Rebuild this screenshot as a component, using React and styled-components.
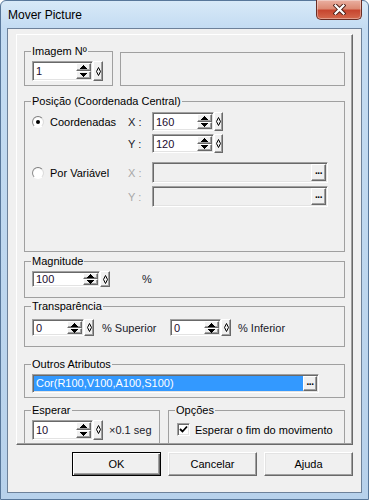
import React from 'react';
import styled, { createGlobalStyle, css } from 'styled-components';

const GlobalStyle = createGlobalStyle`
  html, body {
    margin: 0;
    padding: 0;
    background: #ffffff;
  }
  *, *::before, *::after {
    box-sizing: border-box;
  }
`;

// classic 3d bevels
const raised = css`
  background: #f0f0f0;
  border: 1px solid;
  border-color: #ffffff #696969 #696969 #ffffff;
  box-shadow: inset -1px -1px 0 #a0a0a0;
`;

const sunken = css`
  border: 1px solid;
  border-color: #a0a0a0 #ffffff #ffffff #a0a0a0;
  box-shadow: inset 1px 1px 0 #696969, inset -1px -1px 0 #e3e3e3;
`;

const Window = styled.div`
  width: 369px;
  height: 500px;
  display: flex;
  flex-direction: column;
  border: 1px solid #58779a;
  border-radius: 6px 6px 0 0;
  background: linear-gradient(180deg, #d8e9f8 0px, #c4dcf2 26px, #b7d1eb 100%);
  font-family: "Liberation Sans", Arial, sans-serif;
  font-size: 11px;
  color: #000;
`;

const TitleBar = styled.div`
  height: 27px;
  display: flex;
  align-items: flex-start;
  justify-content: space-between;
  padding-left: 7px;
`;

const Title = styled.span`
  align-self: center;
  font-size: 12px;
  line-height: 14px;
  color: #000;
`;

const CloseButton = styled.div`
  width: 46px;
  height: 20px;
  margin: -1px 6px 0 0;
  display: flex;
  align-items: center;
  justify-content: center;
  border: 1px solid #6a2d24;
  border-top: none;
  border-radius: 0 0 5px 5px;
  background: linear-gradient(180deg, #eab0a2 0%, #dc8a74 45%, #c7462f 55%, #d4694d 100%);
  box-shadow: inset 0 0 0 1px rgba(255, 255, 255, 0.35);
`;

const Client = styled.div`
  flex: 1;
  margin: 0 6px 6px 6px;
  padding: 5px 8px 16px 8px;
  display: flex;
  flex-direction: column;
  border: 1px solid #6d8199;
  background: #f0f0f0;
`;

const Panel = styled.div`
  height: 411px;
  display: flex;
  flex-direction: column;
  padding: 10px 7px 0 7px;
  border: 1px solid;
  border-color: #ffffff #696969 #696969 #ffffff;
  box-shadow: inset -1px -1px 0 #a0a0a0;
`;

const TopRow = styled.div`
  display: flex;
  align-items: flex-end;
  gap: 7px;
`;

const BottomRow = styled.div`
  display: flex;
  gap: 8px;
  margin-top: 6px;
`;

const Group = styled.fieldset`
  margin: 0;
  margin-top: ${p => p.$mt || 0}px;
  width: ${p => (p.$w ? `${p.$w}px` : 'auto')};
  flex: ${p => (p.$w ? 'none' : '1')};
  min-width: 0;
  padding: ${p => p.$pt ?? 3}px 7px ${p => p.$pb ?? 3}px 7px;
  border: 1px solid #a0a0a0;
`;

const Legend = styled.legend`
  margin-left: -1px;
  padding: 0 1px;
  font-size: 11px;
  line-height: 13px;
  color: #000;
`;

const Row = styled.div`
  display: flex;
  align-items: center;
  height: ${p => p.$h}px;
`;

const EmptyFrame = styled.div`
  flex: 1;
  height: 34px;
  border: 1px solid #a0a0a0;
`;

const SpinWrap = styled.div`
  display: flex;
  align-items: stretch;
`;

const SpinBox = styled.div`
  ${sunken}
  width: ${p => p.$w}px;
  height: ${p => p.$h}px;
  padding: 1px;
  display: flex;
  align-items: stretch;
  background: #ffffff;
`;

const SpinValue = styled.span`
  flex: 1;
  display: flex;
  align-items: center;
  padding-left: 2px;
  color: #1b0a2e;
`;

const SpinButtons = styled.div`
  width: 15px;
  display: flex;
  flex-direction: column;
`;

const SpinBtn = styled.div`
  ${raised}
  flex: 1;
  display: flex;
  align-items: center;
  justify-content: center;
`;

const DiamondBtn = styled.div`
  ${raised}
  width: ${p => p.$w}px;
  display: flex;
  align-items: center;
  justify-content: center;
`;

const Unit = styled.span`
  margin-left: ${p => p.$ml || 0}px;
  width: ${p => (p.$w ? `${p.$w}px` : 'auto')};
  color: #1a1a2a;
  white-space: nowrap;
`;

const CoordBlock = styled.div`
  display: grid;
  grid-template-columns: 96px 24px auto;
  grid-auto-rows: ${p => p.$row}px;
  row-gap: 3px;
  align-items: center;
  margin-top: ${p => p.$mt || 0}px;
`;

const Choice = styled.label`
  grid-row: 1;
  grid-column: 1;
  display: flex;
  align-items: center;
  gap: 6px;
`;

const Radio = styled.span`
  width: 12px;
  height: 12px;
  display: flex;
  align-items: center;
  justify-content: center;
  border-radius: 50%;
  border: 1px solid;
  border-color: #7c7c7c #dcdcdc #ffffff #8c8c8c;
  background: radial-gradient(circle at 50% 60%, #ffffff 55%, #e6e6e6 100%);

  &::after {
    content: '';
    width: 4px;
    height: 4px;
    border-radius: 50%;
    background: ${p => (p.$checked ? '#000' : 'transparent')};
  }
`;

const Axis = styled.span`
  grid-column: 2;
  color: ${p => (p.$disabled ? '#a8a8a8' : '#1a1a2a')};
`;

const Cell = styled.div`
  grid-column: 3;
  display: flex;
`;

const PickField = styled.div`
  ${sunken}
  width: ${p => p.$w}px;
  height: ${p => p.$h}px;
  padding: 1px;
  display: flex;
  align-items: center;
  background: ${p => (p.$selected ? '#3399ff' : '#f0f0f0')};
`;

const PickText = styled.span`
  flex: 1;
  padding-left: 2px;
  color: #ffffff;
  white-space: nowrap;
`;

const PickButton = styled.div`
  ${raised}
  width: ${p => p.$w}px;
  height: ${p => p.$h}px;
  margin-left: auto;
  display: flex;
  align-items: center;
  justify-content: center;
  padding-bottom: 3px;
  font-size: 10px;
  font-weight: bold;
  letter-spacing: -0.5px;
  line-height: 1;
`;

const CheckRow = styled.label`
  display: flex;
  align-items: center;
  gap: 5px;
  margin-left: 1px;
`;

const CheckBox = styled.span`
  ${sunken}
  width: 13px;
  height: 13px;
  display: flex;
  align-items: center;
  justify-content: center;
  background: #ffffff;
`;

const ButtonRow = styled.div`
  display: flex;
  justify-content: flex-end;
  gap: 7px;
  margin-top: 7px;
`;

const DialogButton = styled.button`
  width: 89px;
  height: 24px;
  padding: 0;
  font-family: "Liberation Sans", Arial, sans-serif;
  font-size: 11px;
  color: #000;
  background: #f0f0f0;
  border: 1px solid;
  border-color: ${p => (p.$default ? '#000 #000 #000 #000' : '#ffffff #696969 #696969 #ffffff')};
  box-shadow: ${p =>
    p.$default
      ? 'inset 1px 1px 0 #ffffff, inset -1px -1px 0 #696969, inset -2px -2px 0 #a0a0a0'
      : 'inset -1px -1px 0 #a0a0a0, inset 1px 1px 0 #e3e3e3'};
`;

function Arrow({ up }) {
  return (
    <svg width="7" height="4" viewBox="0 0 7 4" shapeRendering="crispEdges">
      <path d={up ? 'M3 0h1v1h1v1h1v1h1v1H0V3h1V2h1V1h1z' : 'M0 0h7v1H6v1H5v1H4v1H3V3H2V2H1V1H0z'} fill="#000" />
    </svg>
  );
}

function Spinner({ value, w, h = 20, d = 10 }) {
  return (
    <SpinWrap>
      <SpinBox $w={w} $h={h}>
        <SpinValue>{value}</SpinValue>
        <SpinButtons>
          <SpinBtn><Arrow up /></SpinBtn>
          <SpinBtn><Arrow /></SpinBtn>
        </SpinButtons>
      </SpinBox>
      <DiamondBtn $w={d}>
        <svg width="5" height="9" viewBox="0 0 5 9">
          <path d="M2.5 0.5 L4.5 4.5 L2.5 8.5 L0.5 4.5 Z" fill="none" stroke="#000" strokeWidth="1" />
        </svg>
      </DiamondBtn>
    </SpinWrap>
  );
}

export default function App() {
  return (
    <>
      <GlobalStyle />
      <Window>
        <TitleBar>
          <Title>Mover Picture</Title>
          <CloseButton>
            <svg width="13" height="11" viewBox="0 0 13 11">
              <path d="M2.5 1.5 L10.5 9.5 M10.5 1.5 L2.5 9.5" stroke="#4a1d16" strokeWidth="4" strokeLinecap="square" />
              <path d="M2.5 1.5 L10.5 9.5 M10.5 1.5 L2.5 9.5" stroke="#ffffff" strokeWidth="2.2" strokeLinecap="square" />
            </svg>
          </CloseButton>
        </TitleBar>

        <Client>
          <Panel>
            <TopRow>
              <Group $w={89} $pt={3} $pb={4}>
                <Legend>Imagem Nº</Legend>
                <Row $h={20}>
                  <Spinner value="1" w={61} h={20} />
                </Row>
              </Group>
              <EmptyFrame />
            </TopRow>

            <Group $mt={9} $pt={4} $pb={44}>
              <Legend>Posição (Coordenada Central)</Legend>
              <CoordBlock $row={19}>
                <Choice>
                  <Radio $checked />
                  Coordenadas
                </Choice>
                <Axis>X :</Axis>
                <Cell><Spinner value="160" w={62} h={19} d={9} /></Cell>
                <Axis>Y :</Axis>
                <Cell><Spinner value="120" w={62} h={19} d={9} /></Cell>
              </CoordBlock>
              <CoordBlock $row={21} $mt={9}>
                <Choice>
                  <Radio />
                  Por Variável
                </Choice>
                <Axis $disabled>X :</Axis>
                <Cell>
                  <PickField $w={176} $h={21}>
                    <PickButton $w={15} $h={17}>...</PickButton>
                  </PickField>
                </Cell>
                <Axis $disabled>Y :</Axis>
                <Cell>
                  <PickField $w={176} $h={21}>
                    <PickButton $w={15} $h={17}>...</PickButton>
                  </PickField>
                </Cell>
              </CoordBlock>
            </Group>

            <Group $mt={3} $pt={3} $pb={6}>
              <Legend>Magnitude</Legend>
              <Row $h={16}>
                <Spinner value="100" w={68} h={16} />
                <Unit $ml={32}>%</Unit>
              </Row>
            </Group>

            <Group $mt={2} $pt={6} $pb={6}>
              <Legend>Transparência</Legend>
              <Row $h={17}>
                <Spinner value="0" w={52} h={17} />
                <Unit $ml={8} $w={68}>% Superior</Unit>
                <Spinner value="0" w={51} h={17} />
                <Unit $ml={7}>% Inferior</Unit>
              </Row>
            </Group>

            <Group $mt={11} $pt={3} $pb={3}>
              <Legend>Outros Atributos</Legend>
              <Row $h={19}>
                <PickField $w={287} $h={19} $selected>
                  <PickText>Cor(R100,V100,A100,S100)</PickText>
                  <PickButton $w={14} $h={15}>...</PickButton>
                </PickField>
              </Row>
            </Group>

            <BottomRow>
              <Group $w={136} $pt={3} $pb={3}>
                <Legend>Esperar</Legend>
                <Row $h={20}>
                  <Spinner value="10" w={61} h={20} />
                  <Unit $ml={6}>×0.1 seg</Unit>
                </Row>
              </Group>
              <Group $pt={3} $pb={3}>
                <Legend>Opções</Legend>
                <Row $h={20}>
                  <CheckRow>
                    <CheckBox>
                      <svg width="9" height="9" viewBox="0 0 9 9">
                        <path d="M1 4 L3.5 6.5 L8 1.5" fill="none" stroke="#000" strokeWidth="1.8" />
                      </svg>
                    </CheckBox>
                    Esperar o fim do movimento
                  </CheckRow>
                </Row>
              </Group>
            </BottomRow>
          </Panel>

          <ButtonRow>
            <DialogButton $default>OK</DialogButton>
            <DialogButton>Cancelar</DialogButton>
            <DialogButton>Ajuda</DialogButton>
          </ButtonRow>
        </Client>
      </Window>
    </>
  );
}
